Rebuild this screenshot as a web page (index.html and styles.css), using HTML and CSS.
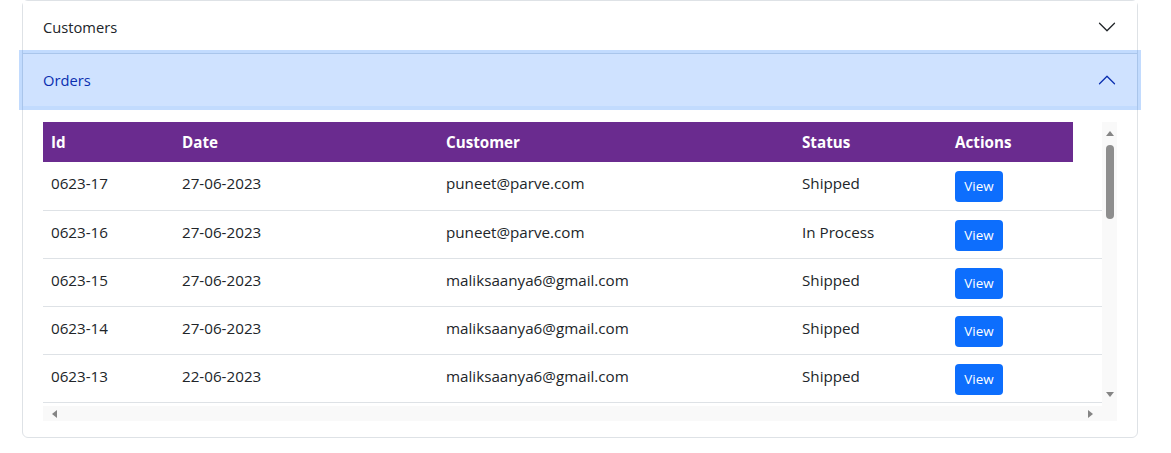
FILE: index.html
```html
<!DOCTYPE html>
<html lang="en">
<head>
<meta charset="utf-8">
<title>Accordion</title>
<link rel="stylesheet" href="styles.css">
</head>
<body>
<div class="accordion">
  <div class="acc-item">
    <button class="acc-btn" type="button">
      <span class="acc-title">Customers</span>
      <svg class="chev" viewBox="0 0 16 16" width="20" height="20"><path fill="currentColor" fill-rule="evenodd" d="M1.646 4.646a.5.5 0 0 1 .708 0L8 10.293l5.646-5.647a.5.5 0 0 1 .708.708l-6 6a.5.5 0 0 1-.708 0l-6-6a.5.5 0 0 1 0-.708z"/></svg>
    </button>
  </div>
  <div class="acc-item acc-item-last">
    <button class="acc-btn acc-btn-open" type="button">
      <span class="acc-title">Orders</span>
      <svg class="chev chev-up" viewBox="0 0 16 16" width="20" height="20"><path fill="currentColor" fill-rule="evenodd" d="M1.646 4.646a.5.5 0 0 1 .708 0L8 10.293l5.646-5.647a.5.5 0 0 1 .708.708l-6 6a.5.5 0 0 1-.708 0l-6-6a.5.5 0 0 1 0-.708z"/></svg>
    </button>
    <div class="acc-body">
      <div class="scroller">
        <div class="viewport">
          <table class="orders">
            <colgroup>
              <col class="c-id"><col class="c-date"><col class="c-cust"><col class="c-status"><col class="c-act">
            </colgroup>
            <thead>
              <tr><th>Id</th><th>Date</th><th>Customer</th><th>Status</th><th class="th-act">Actions</th></tr>
            </thead>
            <tbody>
              <tr><td>0623-17</td><td>27-06-2023</td><td>puneet@parve.com</td><td>Shipped</td><td><button class="btn-view" type="button">View</button></td></tr>
              <tr><td>0623-16</td><td>27-06-2023</td><td>puneet@parve.com</td><td>In Process</td><td><button class="btn-view" type="button">View</button></td></tr>
              <tr><td>0623-15</td><td>27-06-2023</td><td>maliksaanya6@gmail.com</td><td>Shipped</td><td><button class="btn-view" type="button">View</button></td></tr>
              <tr><td>0623-14</td><td>27-06-2023</td><td>maliksaanya6@gmail.com</td><td>Shipped</td><td><button class="btn-view" type="button">View</button></td></tr>
              <tr><td>0623-13</td><td>22-06-2023</td><td>maliksaanya6@gmail.com</td><td>Shipped</td><td><button class="btn-view" type="button">View</button></td></tr>
            </tbody>
          </table>
        </div>
        <div class="vbar">
          <span class="arr arr-up"></span>
          <span class="thumb"></span>
          <span class="vbar-fill"></span>
          <span class="arr arr-down"></span>
        </div>
        <div class="hbar">
          <span class="arr arr-left"></span>
          <span class="arr arr-right"></span>
        </div>
        <div class="corner"></div>
      </div>
    </div>
  </div>
</div>
</body>
</html>
```
FILE: styles.css
```css
* { box-sizing: border-box; }
body {
  margin: 0;
  background: #fff;
  font-family: "Open Sans", "Noto Sans", sans-serif;
  color: #212529;
}
.accordion {
  margin-left: 22px;
  width: 1116px;
  border: 1px solid #dee2e6;
  border-radius: 6px;
  background: #fff;
}
.acc-item + .acc-item { border-top: 1px solid #dee2e6; }
.acc-btn {
  display: flex;
  align-items: center;
  justify-content: space-between;
  width: 100%;
  height: 52px;
  padding: 0 20px;
  border: 0;
  background: #fff;
  font-family: inherit;
  font-size: 14.7px;
  color: #212529;
  text-align: left;
  position: relative;
}
.acc-btn-open {
  background: #cfe2ff;
  color: #0a2fb0;
  z-index: 3;
  box-shadow: 0 0 0 4px rgba(13, 110, 253, 0.25);
}
.chev { display: block; color: #212529; }
.chev-up { transform: rotate(180deg); color: #0a2fb0; }
.acc-body { padding: 16px 20px; }
.scroller {
  display: grid;
  grid-template-columns: 1059px 15px;
  grid-template-rows: 284px 15px;
}
.viewport { overflow: hidden; }
.orders {
  width: 1059px;
  border-collapse: collapse;
  table-layout: fixed;
  font-size: 15.2px;
}
.c-id { width: 131px; }
.c-date { width: 264px; }
.c-cust { width: 356px; }
.c-status { width: 153px; }
.c-act { width: 155px; }
.orders th {
  height: 40px;
  padding: 8px;
  text-align: left;
  font-weight: 700;
  color: #fff;
  background: #6a2b8f;
}
.orders th.th-act {
  background: linear-gradient(to right, #6a2b8f 126px, #fff 126px);
}
.orders td {
  height: 48px;
  padding: 9px 8px 7px;
  line-height: 24px;
  border-bottom: 1px solid #dee2e6;
  vertical-align: top;
}
.btn-view {
  display: block;
  height: 31px;
  width: 48px;
  padding: 0;
  border: 0;
  border-radius: 4px;
  background: #0d6efd;
  color: #fff;
  font-family: inherit;
  font-size: 13.4px;
  line-height: 31px;
}
.vbar {
  background: #f9f9f9;
  display: flex;
  flex-direction: column;
  align-items: center;
}
.hbar {
  background: #f9f9f9;
  display: flex;
  align-items: center;
  justify-content: space-between;
  padding: 0 9px 0 9px;
}
.corner { background: #f9f9f9; }
.arr { display: block; width: 0; height: 0; }
.arr-up {
  margin-top: 9px;
  border-left: 4.5px solid transparent;
  border-right: 4.5px solid transparent;
  border-bottom: 5px solid #858585;
}
.arr-down {
  margin-bottom: 9px;
  border-left: 4.5px solid transparent;
  border-right: 4.5px solid transparent;
  border-top: 5px solid #858585;
}
.arr-left {
  border-top: 4.5px solid transparent;
  border-bottom: 4.5px solid transparent;
  border-right: 5px solid #858585;
}
.arr-right {
  border-top: 4.5px solid transparent;
  border-bottom: 4.5px solid transparent;
  border-left: 5px solid #858585;
}
.thumb {
  margin-top: 9px;
  width: 8px;
  height: 74px;
  border-radius: 4px;
  background: #8e8e8e;
}
.vbar-fill { flex: 1; }
```
